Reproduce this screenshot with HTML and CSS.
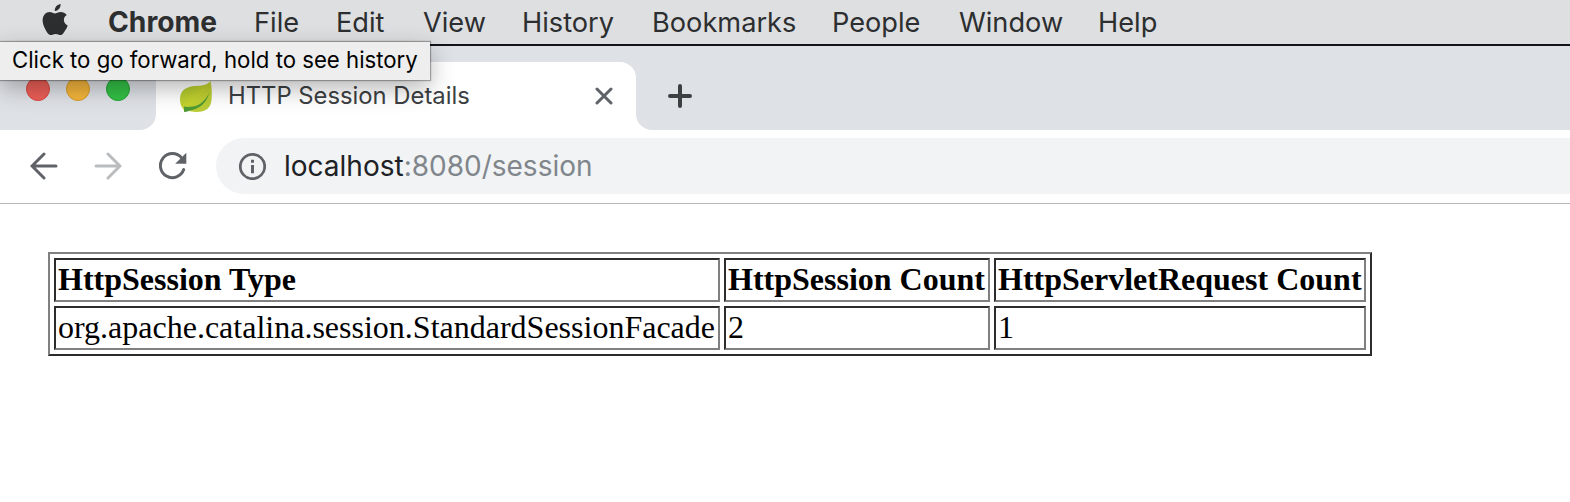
FILE: index.html
```html
<!DOCTYPE html>
<html lang="en">
<head>
<meta charset="utf-8">
<title>HTTP Session Details</title>
<link rel="stylesheet" href="styles.css">
</head>
<body>
<nav class="menubar">
  <svg class="apple" viewBox="0 0 26 32" width="26" height="32"><path d="M18.600 0c.2 2-.6 3.800-1.700 5.100-1.100 1.300-2.700 2-4.100 1.900-.2-1.900.6-3.700 1.700-4.900C15.600.9 17.300.1 18.600 0zM24.800 11.100c-1.900 1.200-2.900 2.800-2.900 4.900 0 2.500 1.500 4.500 3.800 5.400-.6 1.800-1.500 3.500-2.600 5.100-1.200 1.800-2.500 4.600-4.500 4.600s-2.500-1.200-4.900-1.200c-2.300 0-3 1.200-4.900 1.200-2 0-3.400-2.400-4.600-4.200C2.300 23.500.6 20 .6 16.600c0-5.300 3.400-8.600 7-8.600 2.200 0 3.900 1.400 5.300 1.400 1.300 0 3.300-1.500 5.800-1.500 2.300 0 4.600 1.100 6.100 3.200z"/></svg>
  <span class="item chrome">Chrome</span><span class="item file">File</span><span class="item edit">Edit</span><span class="item view">View</span><span class="item history">History</span><span class="item bookmarks">Bookmarks</span><span class="item people">People</span><span class="item window">Window</span><span class="item help">Help</span>
</nav>
<div class="tabstrip">
  <div class="lights"><i class="light red"></i><i class="light amber"></i><i class="light green"></i></div>
  <div class="tab">
    <svg class="leaf" viewBox="0 0 32 32" width="32" height="32"><defs><linearGradient id="leafFill" x1="0" y1="0" x2="1" y2="1"><stop offset="0" stop-color="#a9c52f"/><stop offset=".5" stop-color="#c3d32e"/><stop offset="1" stop-color="#b4c83a"/></linearGradient></defs><path fill="url(#leafFill)" d="M30.500 1C32 8 32 14 31.500 20c-.5 8-6 12-15 12-4 0-7-.8-9-1.500L4 30C1 27 0 23 0 19 0 10 7 6.500 15 6c8-.3 12-1 15.500-5z"/><path fill="#4f9a35" d="M29 13c-3 7-9 12.500-16 13.500-4 .5-7 .5-9 0V32c3 0 4-1 6-1.500C19 29 27 23 29 13z"/></svg>
    <span class="title">HTTP Session Details</span>
    <svg class="close" viewBox="0 0 18 18" width="18" height="18"><path d="M2 2l14 14M16 2L2 16"/></svg>
  </div>
  <svg class="plus" viewBox="0 0 24 24" width="24" height="24"><path d="M12 2v20M2 12h20"/></svg>
</div>
<div class="toolbar">
  <svg class="back" viewBox="0 0 28 28" width="28" height="28"><path d="M26 14H2.500M14 2L2 14l12 12"/></svg>
  <svg class="forward" viewBox="0 0 28 28" width="28" height="28"><path d="M2 14h23.500M14 2l12 12-12 12"/></svg>
  <svg class="reload" viewBox="0 0 28 28" width="28" height="28"><path class="arc" d="M24.700 17.600A12 12 0 1 1 22.600 5.900"/><path class="head" d="M27.300.7v11.100H16.200z"/></svg>
  <div class="omnibox">
    <svg class="info" viewBox="0 0 28 28" width="28" height="28"><circle cx="14.500" cy="14.500" r="12.200"/><path d="M13 7.800h3v3h-3zM13 12.900h3v8.300h-3z"/></svg>
    <span class="url">localhost<span class="path">:8080/session</span></span>
  </div>
</div>
<main class="page">
  <table class="sessions">
    <tr><th class="type">HttpSession Type</th><th class="count">HttpSession Count</th><th class="requests">HttpServletRequest Count</th></tr>
    <tr><td>org.apache.catalina.session.StandardSessionFacade</td><td>2</td><td>1</td></tr>
  </table>
</main>
<div class="tooltip">Click to go forward, hold to see history</div>
</body>
</html>
```
FILE: styles.css
```css
* { box-sizing: border-box; }
body { margin: 0; width: 1570px; height: 502px; overflow: hidden; background: #fff; font-family: Inter, Roboto, "Liberation Sans", sans-serif; }
svg { display: block; flex: none; }
.menubar { display: flex; height: 46px; padding-left: 42px; background: #dedfe0; border-bottom: 2px solid #111318; color: #2c2e30; font-size: 27.2px; line-height: 45px; }
.apple { margin: 4px 40px 0 0; fill: #2c2e30; }
.item { flex: none; white-space: nowrap; }
.chrome { width: 146px; font-size: 28.2px; font-weight: 700; }
.file { width: 82px; }
.edit { width: 87px; }
.view { width: 99px; }
.history { width: 130px; }
.bookmarks { width: 180px; }
.people { width: 127px; }
.window { width: 139px; }
.tabstrip { display: flex; height: 84px; padding-top: 16px; background: linear-gradient(#fff, #fff) 140px 68px / 512px 16px no-repeat, #dee1e6; }
.lights { display: flex; flex: none; gap: 16px; width: 156px; height: 68px; padding: 15px 0 0 26px; background: #dee1e6; border-bottom-right-radius: 16px; }
.light { width: 24px; height: 24px; border-radius: 50%; border: 1px solid; }
.red { background: #ed5f58; border-color: #d9483f; }
.amber { background: #f5b63c; border-color: #d99a28; }
.green { background: #33c146; border-color: #22a532; }
.tab { display: flex; align-items: center; flex: none; width: 480px; height: 68px; padding: 0 23px 0 24px; background: #fff; border-radius: 16px 16px 0 0; color: #3c4043; }
.title { margin-left: 16px; padding-bottom: 2px; font-size: 23.8px; white-space: nowrap; }
.close { margin-left: auto; fill: none; stroke: #5f6368; stroke-width: 3; stroke-linecap: round; }
.plus { box-sizing: content-box; padding: 22px 910px 22px 32px; fill: none; stroke: #3c4043; stroke-width: 4; stroke-linecap: round; background: #dee1e6; border-bottom-left-radius: 16px; }
.toolbar { display: flex; align-items: center; height: 74px; padding-bottom: 1px; background: #fff; border-bottom: 1px solid #b6b7b9; }
.back, .forward { fill: none; stroke: #5f6368; stroke-width: 3; stroke-linecap: round; }
.back { margin-left: 30px; }
.forward { margin-left: 36px; stroke: #babcbe; }
.reload { margin-left: 37px; }
.arc { fill: none; stroke: #5f6368; stroke-width: 3; stroke-linecap: round; }
.head { fill: #5f6368; }
.omnibox { display: flex; align-items: center; flex: 1; height: 56px; margin-left: 29px; padding-left: 22px; background: #f1f3f4; border-radius: 28px 0 0 28px; }
.info { fill: #5f6368; }
.info circle { fill: none; stroke: #5f6368; stroke-width: 2.800; }
.url { margin-left: 18px; font-size: 28px; color: #202124; white-space: nowrap; }
.path { color: #80868b; }
.page { padding: 48px; }
.sessions { width: 1324px; height: 104px; table-layout: fixed; border-collapse: separate; border-spacing: 4px; border: 2px solid; border-color: #808080 #2c2c2e #2c2c2e #808080; font: 32px/36px "Liberation Serif", serif; color: #000; }
.sessions th, .sessions td { height: 44px; padding: 1px 2px 3px; border: 2px solid; border-color: #2c2c2e #808080 #808080 #2c2c2e; text-align: left; white-space: nowrap; }
.type { width: 666px; }
.count { width: 266px; }
.requests { width: 372px; }
.tooltip { position: absolute; left: 0; top: 42px; width: 430px; height: 38px; padding-left: 12px; background: #eee; box-shadow: 0 0 1px 1px rgba(0,0,0,.3), 0 8px 24px rgba(0,0,0,.3); color: #000; font-size: 22.2px; line-height: 35px; white-space: nowrap; }
```
